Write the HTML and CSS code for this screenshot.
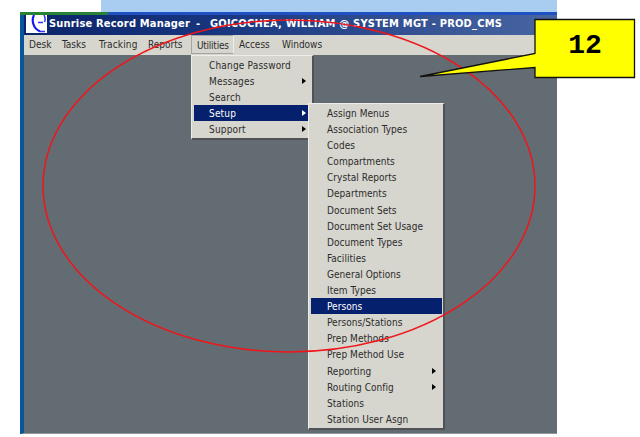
FILE: index.html
```html
<!DOCTYPE html>
<html lang="en">
<head>
<meta charset="utf-8">
<title>Sunrise Record Manager</title>
<link rel="stylesheet" href="styles.css">
</head>
<body>
<div class="page">
  <div class="sky"></div>
  <main class="window">
    <div class="topline"><svg width="90" height="3" viewBox="0 0 90 3"><path d="M0 0H89L87 3H0Z" fill="#288238"/></svg></div>
    <header class="titlebar">
      <svg class="logo" width="21" height="18" viewBox="0 0 21 18"><path d="M0 0H21V18H0Z" fill="#fff"/><path d="M8 0C5.500 5 6.500 13 14 16.500" fill="none" stroke="#1717ef" stroke-width="2.200"/><path d="M18 0Q20 4 18.500 7M12 7.500H17M14 16.500H19" fill="none" stroke="#3333f5" stroke-width="1.500"/></svg>
      <span class="app">Sunrise Record Manager</span><span class="dash">-</span><span class="user">GOICOCHEA, WILLIAM @ SYSTEM MGT - PROD_CMS</span>
    </header>
    <nav class="menubar">
      <span class="desk">Desk</span><span class="tasks">Tasks</span><span class="tracking">Tracking</span><span class="reports">Reports</span><span class="utilities">Utilities</span><span class="access">Access</span><span class="windows">Windows</span>
    </nav>
    <ul class="menu main-menu">
      <li>Change Password</li>
      <li class="sub">Messages</li>
      <li>Search</li>
      <li class="sub on">Setup</li>
      <li class="sub">Support</li>
    </ul>
    <ul class="menu setup-menu">
      <li>Assign Menus</li>
      <li>Association Types</li>
      <li>Codes</li>
      <li>Compartments</li>
      <li>Crystal Reports</li>
      <li>Departments</li>
      <li>Document Sets</li>
      <li>Document Set Usage</li>
      <li>Document Types</li>
      <li>Facilities</li>
      <li>General Options</li>
      <li>Item Types</li>
      <li class="on">Persons</li>
      <li>Persons/Stations</li>
      <li>Prep Methods</li>
      <li>Prep Method Use</li>
      <li class="sub">Reporting</li>
      <li class="sub">Routing Config</li>
      <li>Stations</li>
      <li>Station User Asgn</li>
    </ul>
  </main>
  <svg class="marks" width="640" height="437" viewBox="0 0 640 437">
    <ellipse cx="289" cy="186" rx="246" ry="166" fill="none" stroke="#f01519" stroke-width="1.5"/>
    <path d="M535 19.5H634.5V77.500H535V67.5L420 76.5L535 53.5Z" fill="#ff0" stroke="#111" stroke-width="1.3"/>
  </svg>
  <div class="number">12</div>
</div>
</body>
</html>
```
FILE: styles.css
```css
* { box-sizing: border-box; }
body { margin: 0; background: #fff; font-family: "DejaVu Sans Condensed", "DejaVu Sans", sans-serif; }
.page { position: relative; width: 640px; height: 437px; overflow: hidden; }
.sky { height: 12px; width: 456px; margin-left: 101px; background: #a8cdf1; }
.window { position: relative; width: 537px; height: 422px; margin-left: 20px; background: #646c73; border-left: 4px solid #07559b; border-bottom: 1px solid #8c979f; }
.topline { height: 3px; margin-left: -4px; background: #1e51c2; }
.topline svg { display: block; }
.titlebar { display: flex; height: 20px; line-height: 18px; color: #fff; background: linear-gradient(90deg, #0b246a, #17357e 35%, #4966a2); font-size: 11px; font-weight: bold; white-space: nowrap; }
.logo { width: 21px; margin-left: 2px; margin-right: 2px; flex: none; }
.app { width: 144px; letter-spacing: .19px; }
.dash { width: 17px; padding-left: 3px; }
.user { letter-spacing: .22px; }
.menubar { display: flex; height: 20px; line-height: 20px; background: #d6d5ce; color: #2c2c2c; font-size: 10px; white-space: nowrap; }
.menubar span { flex: none; }
.desk { width: 38px; padding-left: 5px; }
.tasks { width: 37px; }
.tracking { width: 49px; letter-spacing: .15px; }
.reports { width: 43px; }
.utilities { width: 43px; height: 19px; padding-left: 5px; border: 1px solid #a5a5a0; border-right-color: #eee; letter-spacing: -.25px; }
.access { width: 43px; padding-left: 5px; }
.windows { padding-left: 5px; }
.menu { position: absolute; margin: 0; list-style: none; background: #d6d5ce; color: #2c2c2c; border: 1px solid #eeede8; border-right: 2px solid #505255; border-bottom: 2px solid #505255; font-size: 10px; white-space: nowrap; }
.menu li { position: relative; height: 16.1px; line-height: 17.5px; }
.main-menu { left: 167px; top: 43px; width: 123px; height: 85px; padding: 1px 3px 0 2px; }
.main-menu li { padding-left: 15px; letter-spacing: .18px; }
.setup-menu { left: 284px; top: 91px; width: 137px; height: 327px; padding: 1px 1px 0 2px; }
.setup-menu li { padding-left: 16px; letter-spacing: .05px; }
.menu .on { color: #fff; background: #05206c; }
.sub::after { content: ""; position: absolute; right: 3px; top: 5px; border-left: 4px solid #000; border-top: 3.5px solid transparent; border-bottom: 3.5px solid transparent; }
.setup-menu .sub::after { right: 6px; }
.menu .on::after { border-left-color: #fff; }
.marks { position: absolute; left: 0; top: 0; }
.number { position: absolute; left: 535px; top: 32px; width: 100px; text-align: center; font: bold 28px/28px "Liberation Mono", monospace; }
```
